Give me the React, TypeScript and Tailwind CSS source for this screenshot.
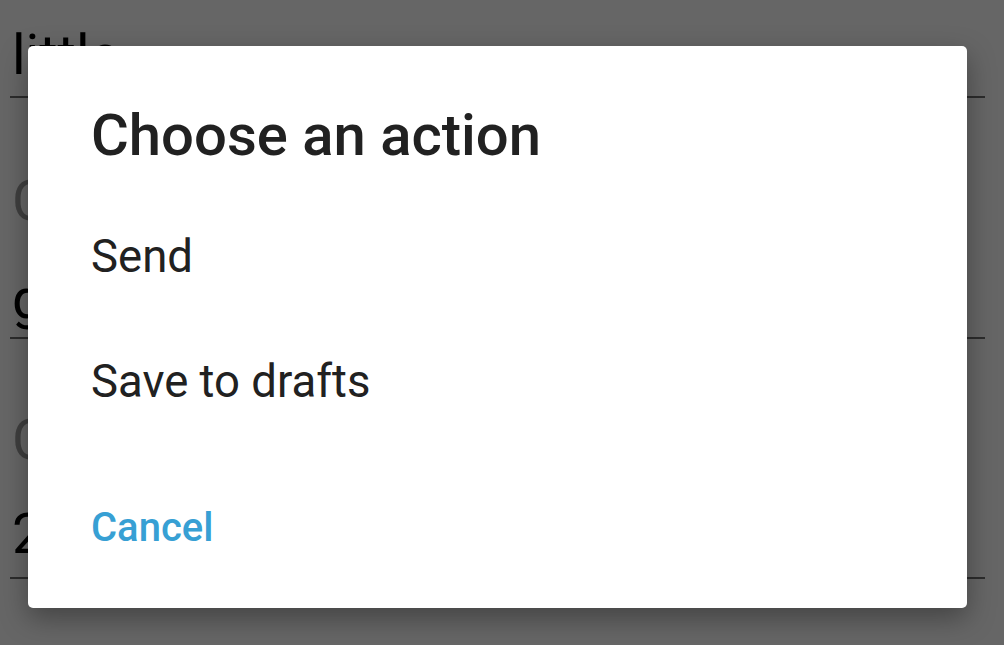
const fields = [
  { hint: null, value: "little" },
  { hint: "Comment", value: "good" },
  { hint: "Count", value: "2" },
];

function Background() {
  return (
    <div className="h-full bg-white pl-[10px] pr-[19px] text-[56px] leading-[66px] text-black">
      {/* first field, value only */}
      <div className="pt-[22px]">
        <div className="pl-[2px]">{fields[0].value}</div>
        <div className="mt-[8px] h-[2px] bg-[#6e6e6e]" />
      </div>
      {/* second field */}
      <div className="pt-[70px]">
        <div className="pl-[2px] text-[#9e9e9e]">{fields[1].hint}</div>
        <div className="mt-[32px] pl-[2px]">{fields[1].value}</div>
        <div className="mt-[5px] h-[2px] bg-[#6e6e6e]" />
      </div>
      {/* third field */}
      <div className="pt-[68px]">
        <div className="pl-[2px] text-[#9e9e9e]">{fields[2].hint}</div>
        <div className="mt-[28px] pl-[2px]">{fields[2].value}</div>
        <div className="mt-[10px] h-[2px] bg-[#6e6e6e]" />
      </div>
    </div>
  );
}

const actions = ["Send", "Save to drafts"];

export default function App() {
  return (
    <div
      className="relative h-screen w-full overflow-hidden"
      style={{ fontFamily: "Roboto, 'Noto Sans', sans-serif" }}
    >
      <Background />

      {/* Dim overlay + dialog */}
      <div className="absolute inset-0 bg-black/60 pl-[28px] pt-[46px]">
        <div className="w-[939px] h-[562px] rounded-[5px] bg-white pl-[63px] pt-[56px] shadow-[0_10px_28px_rgba(0,0,0,0.35)]">
          <h2 className="text-[58px] leading-[66px] font-medium text-[#212121]">
            Choose an action
          </h2>
          <div className="mt-[27px] flex flex-col">
            {actions.map((a) => (
              <div
                key={a}
                className="h-[125px] flex items-center text-[45.5px] text-[#212121]"
              >
                {a}
              </div>
            ))}
          </div>
          <div className="mt-[53px] h-[60px] flex items-center text-[40px] font-medium text-[#37a0d4]">
            Cancel
          </div>
        </div>
      </div>
    </div>
  );
}
